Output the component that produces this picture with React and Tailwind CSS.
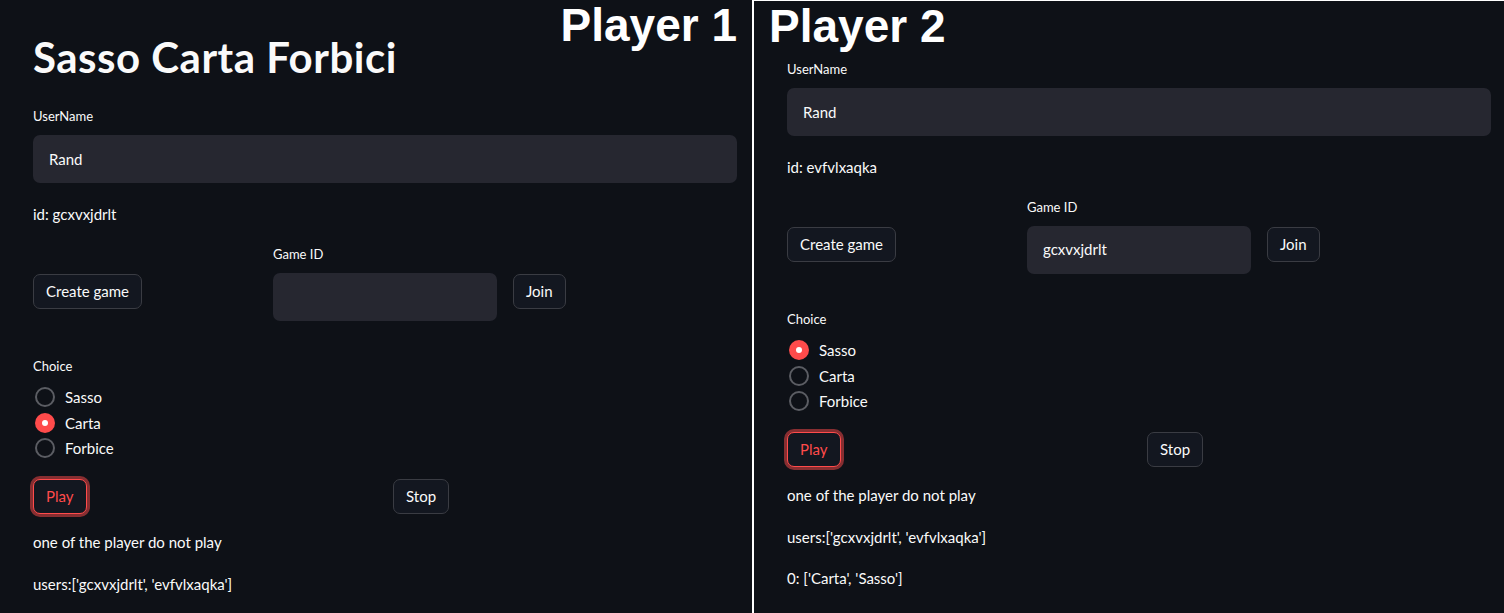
import React from 'react';

const font = { fontFamily: 'Lato, "Noto Sans", sans-serif' };

const Label = ({ children }) => (
    <div className="h-[20px] leading-[20px] mb-[9px] text-[13px] text-[#fafafa]">{children}</div>
);

const Btn = ({ children, active }) => (
    <button
        className={`h-[35px] px-[12px] rounded-[7px] border text-[15px] leading-none bg-[#131720] ${
            active
                ? 'border-[#ff4b4b] text-[#ff4b4b] shadow-[0_0_0_3px_rgba(255,75,75,0.5)]'
                : 'border-[#3a3c43] text-[#fafafa]'
        }`}
    >
        {children}
    </button>
);

const Input = ({ value, className = '' }) => (
    <div className={`h-[48px] rounded-[7px] bg-[#262730] px-[16px] flex items-center text-[15px] text-[#fafafa] ${className}`}>
        {value}
    </div>
);

const Radio = ({ label, checked }) => (
    <div className="h-[25.5px] flex items-center gap-[10px] pl-[2px]">
        {checked ? (
            <span className="w-[20px] h-[20px] rounded-full bg-[#ff4b4b] flex items-center justify-center">
                <span className="w-[6px] h-[6px] rounded-full bg-white" />
            </span>
        ) : (
            <span className="w-[20px] h-[20px] rounded-full border-2 border-[#5b5d63]" />
        )}
        <span className="text-[15px] text-[#fafafa]">{label}</span>
    </div>
);

const Line = ({ children, className = '' }) => (
    <p className={`h-[22px] leading-[22px] text-[15px] text-[#fafafa] ${className}`}>{children}</p>
);

const Game = ({ id, gameId, choice, results }) => (
    <div className="w-[704px]">
        <Label>UserName</Label>
        <Input value="Rand" />
        <Line className="mt-[19.5px]">id: {id}</Line>

        {/* riga create / game id / join */}
        <div className="mt-[19px] grid grid-cols-3 gap-[16px]">
            <div className="pt-[30px]"><Btn>Create game</Btn></div>
            <div>
                <Label>Game ID</Label>
                <Input value={gameId} />
            </div>
            <div className="pt-[30px]"><Btn>Join</Btn></div>
        </div>

        <div className="mt-[35px]">
            <Label>Choice</Label>
            {['Sasso', 'Carta', 'Forbice'].map(c => (
                <Radio key={c} label={c} checked={c === choice} />
            ))}
        </div>

        <div className="mt-[17.5px] grid grid-cols-2 gap-[16px]">
            <div><Btn active>Play</Btn></div>
            <div><Btn>Stop</Btn></div>
        </div>

        <Line className="mt-[17px]">one of the player do not play</Line>
        <Line className="mt-[20px]">users:['gcxvxjdrlt', 'evfvlxaqka']</Line>
        {results && <Line className="mt-[19px]">{results}</Line>}
    </div>
);

const heading = { fontFamily: '"Liberation Sans", Arial, sans-serif' };

export default function App() {
    return (
        <div className="w-[1504px] h-[613px] flex bg-[#0e1117] overflow-hidden" style={font}>
            {/* Player 1 */}
            <div className="relative w-[752px] h-full pl-[33px]">
                <span className="absolute right-[15px] top-0 text-[46px] font-bold text-white leading-[50px]" style={heading}>
                    Player 1
                </span>
                <h1 className="pt-[33px] h-[106px] text-[42px] tracking-[0.5px] font-bold leading-[48px] text-[#fafafa]">
                    Sasso Carta Forbici
                </h1>
                <Game id="gcxvxjdrlt" gameId="" choice="Carta" />
            </div>

            <div className="w-[2px] h-full bg-white" />

            {/* Player 2 */}
            <div className="w-[750px] h-full border-t border-white pl-[33px]">
                <div className="h-[58px] -ml-[18px] text-[46px] font-bold text-white leading-[50px]" style={heading}>
                    Player 2
                </div>
                <Game id="evfvlxaqka" gameId="gcxvxjdrlt" choice="Sasso" results="0: ['Carta', 'Sasso']" />
            </div>
        </div>
    );
}
